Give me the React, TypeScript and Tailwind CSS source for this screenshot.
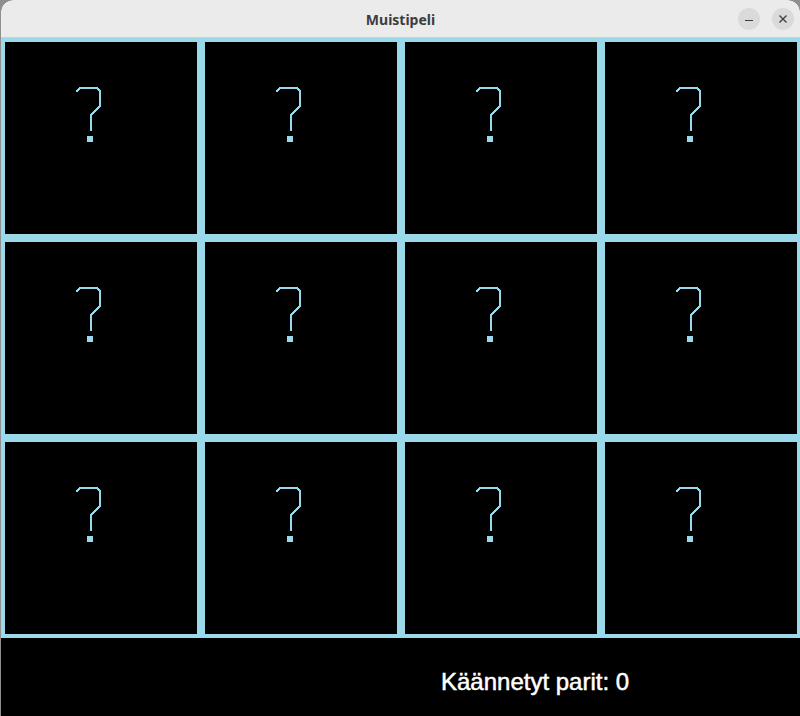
import React from "react";

const CELLS = Array.from({ length: 12 }, (_, i) => i);

function QuestionMark() {
  return (
    <svg
      width="28"
      height="58"
      viewBox="0 0 28 58"
      shapeRendering="crispEdges"
      className="block"
    >
      <path
        d="M2 7 L6 3 L23 3 L26 6 L26 21 L17 30 L17 46"
        fill="none"
        stroke="#99d9ea"
        strokeWidth="2"
      />
      <rect x="13" y="51" width="6" height="6" fill="#99d9ea" />
    </svg>
  );
}

function Card() {
  return (
    <div className="w-[200px] h-[200px] border-4 border-[#99d9ea] bg-black pl-[69px] pt-[43px]">
      <QuestionMark />
    </div>
  );
}

export default function App() {
  return (
    <div className="w-[800px] h-[716px] overflow-hidden bg-[#8f8f8f] flex">
      <div className="ml-px flex-1 flex flex-col rounded-t-[12px] overflow-hidden bg-black">

        {/* TITLE BAR */}
        <div className="h-[38px] shrink-0 grid grid-cols-[1fr_auto_1fr] items-center bg-[#ebebeb] border-b border-[#cfcfcf]">
          <div />
          <p className="font-['Noto_Sans',sans-serif] font-bold text-[14px] text-[#3d3d3d] pt-px">
            Muistipeli
          </p>
          <div className="flex justify-end gap-3 pr-[6px]">
            <div className="w-[22px] h-[22px] rounded-full bg-[#dadada] flex items-center justify-center">
              <div className="w-[8px] h-px bg-[#3d3d3d] mt-[4px]" />
            </div>
            <div className="w-[22px] h-[22px] rounded-full bg-[#dadada] flex items-center justify-center">
              <svg width="10" height="10" viewBox="0 0 10 10">
                <path d="M1.5 1.5 L8.5 8.5 M8.5 1.5 L1.5 8.5" stroke="#3d3d3d" strokeWidth="1.3" />
              </svg>
            </div>
          </div>
        </div>

        {/* GAME GRID */}
        <div className="w-[800px] shrink-0 grid grid-cols-[repeat(4,200px)]">
          {CELLS.map((i) => (
            <Card key={i} />
          ))}
        </div>

        {/* STATUS */}
        <div className="flex-1 bg-black pl-[440px] pt-[32px]">
          <p className="font-['Liberation_Sans',Arial,sans-serif] text-[24px] leading-[24px] text-white [-webkit-text-stroke:0.5px_white]">
            Käännetyt parit: 0
          </p>
        </div>

      </div>
    </div>
  );
}
